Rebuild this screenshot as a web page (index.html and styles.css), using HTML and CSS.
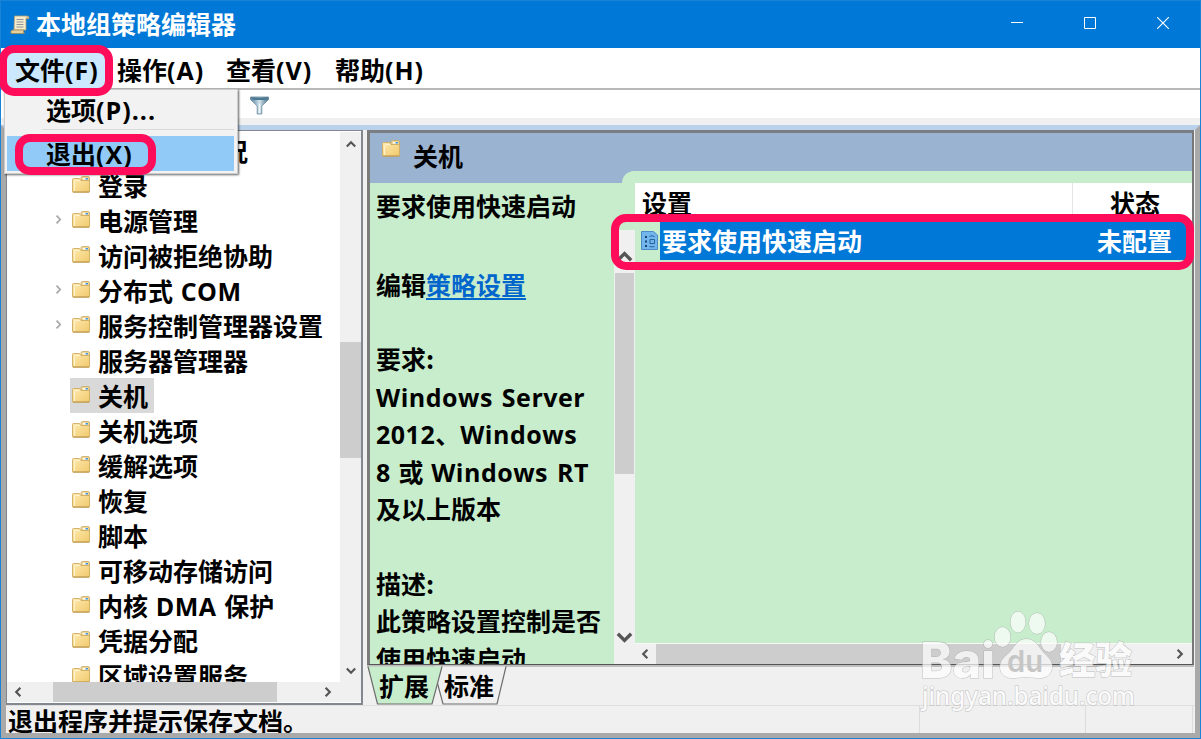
FILE: index.html
```
<!DOCTYPE html>
<html lang="zh-CN">
<head>
<meta charset="UTF-8">
<title>本地组策略编辑器</title>
<link rel="stylesheet" href="styles.css">
</head>
<body>

<!-- Shared icons -->
<svg class="defs" width="0" height="0">
    <defs>
        <linearGradient id="paper" x1="0" y1="0" x2="1" y2="1">
            <stop offset="0" stop-color="#ffeab0"/>
            <stop offset="1" stop-color="#f0c96c"/>
        </linearGradient>
        <linearGradient id="steel" x1="0" y1="0" x2="1" y2="0">
            <stop offset="0" stop-color="#4f7d98"/>
            <stop offset="0.5" stop-color="#d5e5ed"/>
            <stop offset="1" stop-color="#416b85"/>
        </linearGradient>
    </defs>
    <symbol id="folder" viewBox="0 0 18 17">
        <path d="M9 4V2q0-1.500 1.500-1.500H16q1.500 0 1.500 1.500v3H9z" fill="#f0d898" stroke="#c9a65b" stroke-width=".8"/>
        <path d="M11 2h5v1.500h-5z" fill="#fff"/>
        <path d="M13.500 2H16v1.500h-2.500z" fill="#3c96e0"/>
        <path d="M.5 3.500Q.5 2.500 1.500 2.500h6L9 4.500h8.500V15.500q0 .7-.7.700H1.200q-.7 0-.7-.7z" fill="url(#paper)" stroke="#cfac62" stroke-width=".9"/>
        <path d="M2.500 15V6q0-1.500 1.500-1.500h4" fill="none" stroke="#fff3cd" stroke-width="1"/>
        <path d="M1 16h16.300" stroke="#b89550" stroke-width="1"/>
    </symbol>
    <symbol id="up" viewBox="0 0 10 10"><path d="M1.500 7L5 3.500 8.500 7" fill="none" stroke="#555" stroke-width="1.800"/></symbol>
    <symbol id="down" viewBox="0 0 10 10"><path d="M1.500 3L5 6.500 8.500 3" fill="none" stroke="#555" stroke-width="1.800"/></symbol>
    <symbol id="left" viewBox="0 0 10 10"><path d="M7 1.500L3.500 5 7 8.500" fill="none" stroke="#555" stroke-width="1.800"/></symbol>
    <symbol id="right" viewBox="0 0 10 10"><path d="M3 1.500L6.500 5 3 8.500" fill="none" stroke="#555" stroke-width="1.800"/></symbol>
    <symbol id="expand" viewBox="0 0 10 10"><path d="M3.500 2L6.300 5 3.500 8" fill="none" stroke="#a6a6a6" stroke-width="1.300"/></symbol>
</svg>

<div class="window">
    <div class="titlebar">
        <svg class="app-icon" width="20" height="20" viewBox="0 0 20 20">
            <path d="M4.500 1H17q2 0 2 2.500h-3V15H4z" fill="#f5ecd0" stroke="#b29d6c" stroke-width=".8"/>
            <path d="M16 3.500Q16 1 17.500 1T19 3.500z" fill="#cbb482"/>
            <path d="M1 18.500q-1-3.500 2-3.500h11q-1.500 2 .5 3.500z" fill="#e6d19c" stroke="#a08a5b" stroke-width=".8"/>
            <path d="M6.500 4.500h7M6.500 7h7M6.500 9.500h7M6.500 12h7" stroke="#8f9599" stroke-width="1.100"/>
        </svg>
        <span class="caption">本地组策略编辑器</span>
        <div class="controls">
            <svg width="12" height="12"><path d="M0 5.500h12" stroke="#fff"/></svg>
            <svg width="12" height="12"><path d="M.5.5h11v11H.5z" fill="none" stroke="#fff"/></svg>
            <svg width="12" height="12"><path d="M0 0l12 12M12 0L0 12" stroke="#fff" stroke-width="1.100"/></svg>
        </div>
    </div>

    <div class="menubar">
        <span class="menu open">文件<b>(F)</b></span>
        <span class="menu">操作<b>(A)</b></span>
        <span class="menu">查看<b>(V)</b></span>
        <span class="menu">帮助<b>(H)</b></span>
    </div>

    <div class="toolbar">
        <svg width="19" height="19" viewBox="0 0 19 19">
            <path d="M.5 1h18v2.500L11.800 10v8H7.200v-8L.5 3.500z" fill="url(#steel)" stroke="#64879b" stroke-width=".8"/>
            <path d="M1.500 1.500h16L15.500 4h-12z" fill="#4b7893"/>
            <path d="M9.500 8v9" stroke="#eef5f8" stroke-width="1.500"/>
        </svg>
    </div>

    <div class="client">
        <!-- Tree -->
        <div class="tree">
            <div class="tree-main">
                <div class="nodes">
                    <div class="node"><i></i><svg><use href="#folder"/></svg><span>磁盘配额情况</span></div>
                    <div class="node"><i></i><svg><use href="#folder"/></svg><span>登录</span></div>
                    <div class="node"><i><svg><use href="#expand"/></svg></i><svg><use href="#folder"/></svg><span>电源管理</span></div>
                    <div class="node"><i></i><svg><use href="#folder"/></svg><span>访问被拒绝协助</span></div>
                    <div class="node"><i><svg><use href="#expand"/></svg></i><svg><use href="#folder"/></svg><span>分布式 <b>COM</b></span></div>
                    <div class="node"><i><svg><use href="#expand"/></svg></i><svg><use href="#folder"/></svg><span>服务控制管理器设置</span></div>
                    <div class="node"><i></i><svg><use href="#folder"/></svg><span>服务器管理器</span></div>
                    <div class="node selected"><i></i><svg><use href="#folder"/></svg><span>关机</span></div>
                    <div class="node"><i></i><svg><use href="#folder"/></svg><span>关机选项</span></div>
                    <div class="node"><i></i><svg><use href="#folder"/></svg><span>缓解选项</span></div>
                    <div class="node"><i></i><svg><use href="#folder"/></svg><span>恢复</span></div>
                    <div class="node"><i></i><svg><use href="#folder"/></svg><span>脚本</span></div>
                    <div class="node"><i></i><svg><use href="#folder"/></svg><span>可移动存储访问</span></div>
                    <div class="node"><i></i><svg><use href="#folder"/></svg><span>内核 <b>DMA</b> 保护</span></div>
                    <div class="node"><i></i><svg><use href="#folder"/></svg><span>凭据分配</span></div>
                    <div class="node"><i></i><svg><use href="#folder"/></svg><span>区域设置服务</span></div>
                </div>
                <div class="vscroll">
                    <svg><use href="#up"/></svg>
                    <div class="thumb"></div>
                    <svg><use href="#down"/></svg>
                </div>
            </div>
            <div class="hscroll">
                <svg><use href="#left"/></svg>
                <div class="thumb"></div>
                <svg><use href="#right"/></svg>
            </div>
        </div>

        <!-- Result pane -->
        <div class="result">
            <div class="frame">
                <div class="banner">
                    <svg><use href="#folder"/></svg>
                    <span>关机</span>
                    <div class="banner-tab"></div>
                </div>
                <div class="panes">
                    <div class="desc">
                        <p class="desc-title">要求使用快速启动</p>
                        <p class="desc-edit">编辑<a>策略设置</a></p>
                        <p>要求:<br><b>Windows Server</b><br><b>2012</b>、<b>Windows</b><br><b>8</b> 或 <b>Windows RT</b><br>及以上版本</p>
                        <p class="desc-about">描述:<br>此策略设置控制是否<br>使用快速启动</p>
                    </div>
                    <div class="desc-scroll">
                        <svg><use href="#up"/></svg>
                        <div class="thumb"></div>
                        <svg><use href="#down"/></svg>
                    </div>
                    <div class="list">
                        <div class="list-head">
                            <span class="col-name">设置</span>
                            <span class="col-state">状态</span>
                        </div>
                        <div class="list-row">
                            <svg width="17" height="19" viewBox="0 0 17 19">
                                <path d="M.5.5h12l4 3.500v14.500H.5z" fill="#72b4ec" stroke="#4a8cc8"/>
                                <path d="M4 5h2v2H4zM4 9.500h2v2H4zM4 14h2v2H4z" fill="#17446f"/>
                                <path d="M8.500 5.500q2.500-1.500 5 0M8.500 15.500q2.500.8 5 0M9 8.500h4.500v4H9z" fill="none" stroke="#25659f"/>
                            </svg>
                            <div class="row-fill">
                                <span>要求使用快速启动</span>
                                <span>未配置</span>
                            </div>
                        </div>
                        <div class="list-empty"></div>
                        <div class="hscroll">
                            <svg><use href="#left"/></svg>
                            <div class="thumb"></div>
                            <svg><use href="#right"/></svg>
                        </div>
                    </div>
                </div>
            </div>
            <div class="tabs">
                <svg class="tab-shape" width="140" height="39" viewBox="0 0 140 39">
                    <path d="M139 .5L130 38H76L66 .5" fill="#f0f0f0" stroke="#6d6d6d" stroke-width="1.200"/>
                    <path d="M1 .5L10.500 38H65L75 .5" fill="#c7edcc" stroke="#6d6d6d" stroke-width="1.200"/>
                </svg>
                <span>扩展</span>
                <span>标准</span>
            </div>
        </div>
    </div>

    <div class="statusbar">
        <span class="status-text">退出程序并提示保存文档。</span>
        <span class="status-cell"></span>
        <span class="status-cell last"></span>
    </div>
</div>

<!-- File menu -->
<div class="dropdown">
    <div class="item">选项<b>(P)...</b></div>
    <div class="line"></div>
    <div class="item active">退出<b>(X)</b></div>
</div>

<!-- Highlight marks -->
<div class="mark mark-file"></div>
<div class="mark mark-exit"></div>
<div class="mark mark-row"></div>

<svg class="watermark" width="230" height="120" viewBox="0 0 230 120">
    <g class="wm">
        <text x="0" y="73" font-size="49" font-weight="800" textLength="75" lengthAdjust="spacingAndGlyphs">Bai</text>
        <ellipse cx="82.500" cy="32" rx="8" ry="10"/>
        <ellipse cx="98" cy="17" rx="7.500" ry="10.500"/>
        <ellipse cx="117" cy="18.500" rx="8" ry="10.500"/>
        <ellipse cx="129" cy="37" rx="8" ry="10"/>
        <path d="M106 34c9 0 12 7 17 13 5 5 10 9 9 16-1 8-8 11-15 10-7-1-15-1-22 0-8 1-15-3-15-11 0-7 5-10 10-15 5-6 8-13 16-13z"/>
        <text x="139" y="69" font-size="37" class="cjk" font-weight="900" textLength="73" lengthAdjust="spacingAndGlyphs">经验</text>
        <text x="2" y="100" font-size="25" class="url" textLength="213" lengthAdjust="spacingAndGlyphs">jingyan.baidu.com</text>
    </g>
    <text class="du" x="87" y="67" font-size="30" textLength="36" lengthAdjust="spacingAndGlyphs">du</text>
</svg>

</body>
</html>
```
FILE: styles.css
```
:root {
    --accent: #0078d7;
    --green: #c7edcc;
    --face: #f0f0f0;
    --thumb: #cdcdcd;
    --mark: #ff0d5b;
}

* {
    box-sizing: border-box;
}

body {
    margin: 0;
    width: 1201px;
    height: 739px;
    overflow: hidden;
    position: relative;
    font-family: "Noto Sans CJK SC", "Noto Sans", sans-serif;
    font-size: 25px;
    font-weight: bold;
    color: #000;
    white-space: nowrap;
}

b {
    font-family: "Open Sans", "Noto Sans", sans-serif;
    font-weight: 700;
    line-height: 1;
    letter-spacing: 0.5px;
}

p {
    margin: 0;
}

svg {
    display: block;
    flex: none;
}

.defs {
    position: absolute;
}

.window {
    height: 739px;
    display: flex;
    flex-direction: column;
    background: var(--face);
    border: 1px solid #1883d7;
    border-top: none;
}

.window > div {
    flex: none;
}

/* Title, menu, toolbar */
.titlebar {
    height: 48px;
    display: flex;
    align-items: center;
    background: var(--accent);
    border-top: 1px solid #1883d7;
    color: #fff;
    padding-left: 9px;
}

.caption {
    margin-left: 6px;
    padding-bottom: 3px;
    line-height: 44px;
}

.controls {
    display: flex;
    gap: 61px;
    margin-left: auto;
    margin-right: 31px;
    padding-bottom: 3px;
}

.menubar {
    height: 42px;
    display: flex;
    padding: 4px 0 0 6px;
    background: #fff;
    border-bottom: 2px solid #b8b8b8;
}

.menu {
    width: 109px;
    height: 36px;
    padding-left: 8px;
    line-height: 35px;
}

.menu b,
.item b {
    letter-spacing: 1px;
}

.menu.open {
    width: 98px;
    background: #cce8ff;
    margin-right: 4px;
}

.toolbar {
    height: 28px;
    padding: 6px 0 0 249px;
    background: #fff;
}

.client {
    height: 580px;
    margin-top: 7px;
    border-top: 5px solid #b9d1ea;
    border-left: 5px solid #a9a9a9;
    border-right: 5px solid #a9a9a9;
    display: flex;
    gap: 4px;
}

/* Tree */
.tree {
    width: 357px;
    height: 575px;
    border: 1px solid #828790;
    border-bottom-width: 2px;
    border-right-width: 2px;
    background: #fff;
    display: flex;
    flex-direction: column;
    padding: 1px 0;
}

.tree-main {
    height: 550px;
    display: flex;
    overflow: hidden;
}

.nodes {
    flex: 1;
    padding-top: 1px;
    overflow: hidden;
}

.node {
    height: 35px;
    display: flex;
    align-items: center;
}

.node i {
    width: 65px;
    padding-left: 45px;
}

.node i svg {
    width: 13px;
    height: 13px;
    margin-bottom: 3px;
}

.node > svg {
    width: 18px;
    height: 17px;
    margin-bottom: 2px;
}

.node span {
    padding-left: 8px;
    line-height: 35px;
    word-spacing: 2px;
}

.node.selected {
    background: linear-gradient(#d9d9d9, #d9d9d9) 63px 0 / 84px 35px no-repeat;
}

/* Scroll bars */
.vscroll {
    width: 21px;
    background: var(--face);
    display: flex;
    flex-direction: column;
    align-items: center;
    padding: 6px 0 5px;
}

.vscroll svg,
.hscroll svg {
    width: 12px;
    height: 12px;
}

.vscroll .thumb {
    width: 21px;
    height: 116px;
    margin: 192px 0 auto;
    background: var(--thumb);
}

.hscroll {
    height: 20px;
    background: var(--face);
    display: flex;
    align-items: center;
    padding: 0 27px 0 5px;
}

.hscroll .thumb {
    width: 224px;
    height: 20px;
    margin: 0 auto 0 29px;
    background: var(--thumb);
}

/* Result pane */
.result {
    width: 827px;
}

.frame {
    height: 535px;
    border-top: 3px solid #7a7d82;
    border-left: 3px solid #7b7b7b;
    border-right: 2px solid #777;
    border-bottom: 1px solid #555;
    background: var(--green);
}

.banner {
    height: 50px;
    display: flex;
    align-items: flex-start;
    background: #9ab3d1;
}

.banner svg {
    width: 18px;
    height: 17px;
    margin: 7px 0 0 12px;
}

.banner span {
    line-height: 45px;
    padding-left: 13px;
}

.banner-tab {
    width: 570px;
    height: 12px;
    margin: 38px 0 0 auto;
    background: var(--green);
    border-top-left-radius: 12px;
}

.panes {
    height: 481px;
    display: flex;
}

.desc {
    width: 244px;
    padding-left: 6px;
    line-height: 37.5px;
    word-spacing: 2px;
    overflow: hidden;
}

.desc-title {
    padding-top: 4px;
}

.desc-edit {
    padding-top: 41px;
}

.desc-edit + p {
    padding-top: 37px;
}

.desc-about {
    padding-top: 37px;
}

.desc a {
    color: #0066cc;
    text-decoration: underline;
    text-decoration-thickness: 2px;
    text-underline-offset: 3px;
}

.desc-scroll {
    width: 21px;
    margin-top: 47px;
    background: var(--face);
    display: flex;
    flex-direction: column;
    align-items: center;
    padding: 17px 0 17px;
}

.desc-scroll svg {
    width: 19px;
    height: 19px;
}

.desc-scroll .thumb {
    width: 19px;
    height: 201px;
    margin: 7px 0 auto;
    background: var(--thumb);
}

.list {
    width: 557px;
    display: flex;
    flex-direction: column;
}

.list-head {
    height: 38px;
    display: flex;
    background: #fff;
    line-height: 38px;
}

.col-name {
    width: 438px;
    padding-left: 7px;
    border-right: 1px solid #e5e5e5;
}

.col-state {
    padding-left: 37px;
}

.list-row {
    height: 39px;
    display: flex;
    align-items: center;
    padding-left: 6px;
}

.row-fill {
    flex: 1;
    height: 39px;
    margin-left: 2px;
    padding: 0 20px 0 2px;
    display: flex;
    justify-content: space-between;
    background: var(--accent);
    color: #fff;
    line-height: 39px;
}

.list-empty {
    flex: 1;
}

.list .hscroll {
    height: 21px;
    padding: 0 6px 0 4px;
    border-top: 1px solid #f8f8f8;
}

.list .thumb {
    width: 405px;
    margin-left: 5px;
}

.tabs {
    height: 40px;
    position: relative;
    display: flex;
    gap: 15px;
    padding-left: 12px;
    border-top: 2px solid #bdbdbd;
    line-height: 37px;
}

.tab-shape {
    position: absolute;
    left: 0;
    top: -1px;
}

.tabs span {
    position: relative;
}

/* Status bar */
.statusbar {
    height: 33px;
    display: flex;
    border: 5px solid #a9a9a9;
    border-top: none;
    line-height: 31px;
    overflow: hidden;
    box-shadow: inset 0 1px 0 #dfdfdf;
}

.status-text {
    width: 914px;
    height: 28px;
    overflow: hidden;
    padding-left: 2px;
    border-right: 1px solid #dcdcdc;
}

.status-cell {
    width: 166px;
    border-right: 1px solid #dcdcdc;
}

.status-cell.last {
    width: 107px;
}

/* File menu */
.dropdown {
    position: absolute;
    left: 4px;
    top: 89px;
    width: 234px;
    height: 85px;
    padding: 3px 3px 3px 2px;
    background: #f2f2f2;
    border: 1px solid #ccc;
    box-shadow: 1px 1px 2px rgba(0, 0, 0, 0.6);
}

.item {
    height: 35px;
    padding-left: 39px;
    line-height: 33px;
}

.item.active {
    background: #91c9f7;
    line-height: 35px;
}

.line {
    height: 1px;
    margin: 1px 0 6px 35px;
    background: #dadada;
}

/* Highlight marks */
.mark {
    position: absolute;
    border: 8px solid var(--mark);
    border-radius: 15px;
}

.mark-file {
    left: -1px;
    top: 45px;
    width: 114px;
    height: 51px;
}

.mark-exit {
    left: 15px;
    top: 134px;
    width: 141px;
    height: 41px;
}

.mark-row {
    left: 611px;
    top: 214px;
    width: 583px;
    height: 56px;
}

/* Watermark */
.watermark {
    position: absolute;
    left: 920px;
    top: 605px;
    font-family: Inter, "Liberation Sans", sans-serif;
}

.wm {
    fill: #fff;
    stroke: #aaa;
    stroke-width: 1px;
    paint-order: stroke;
    opacity: 0.7;
}

.watermark .cjk {
    font-family: "Noto Sans CJK SC", sans-serif;
}

.watermark .url {
    font-family: "Noto Sans", sans-serif;
    font-weight: 500;
}

.watermark .du {
    fill: #c6c6c6;
    font-weight: 600;
}
```
